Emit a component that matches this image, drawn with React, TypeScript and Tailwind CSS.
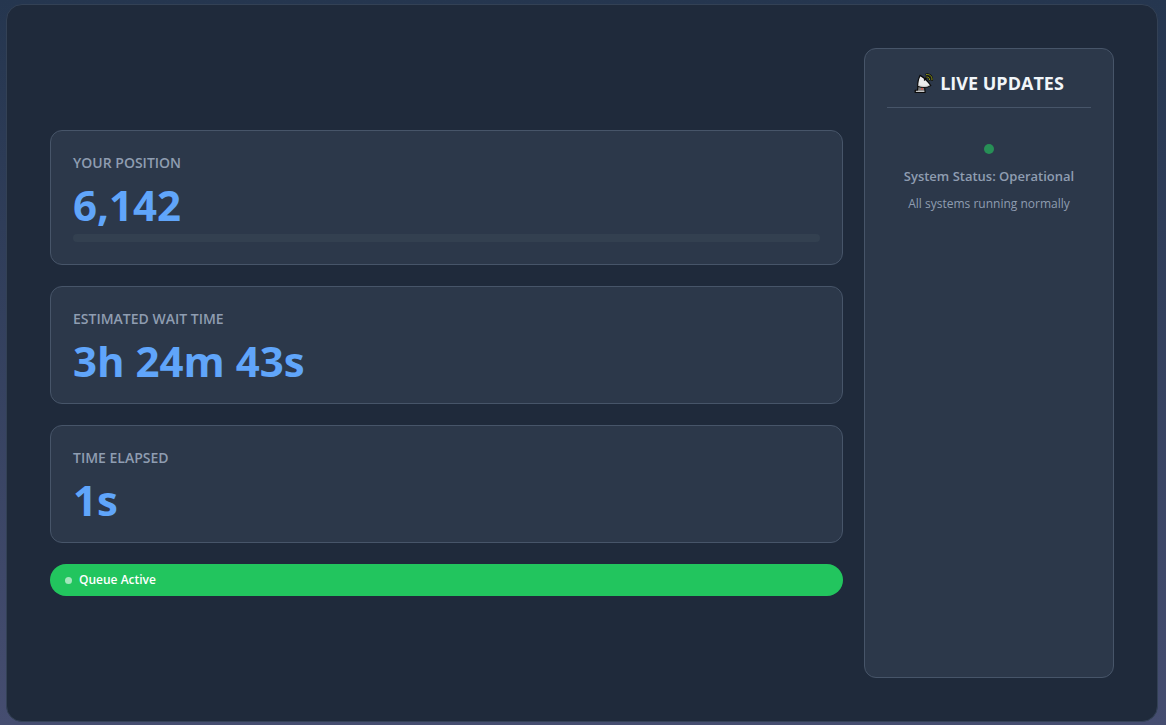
import type { ReactNode } from "react";

function SatelliteIcon() {
    return (
        <svg className="h-5 w-5 shrink-0" viewBox="0 0 20 20" fill="none" aria-hidden="true">
            <path d="M4 12.500h6.500l.6 7H1.200V17.300h2.300z" fill="#7b7b7b" stroke="#0b0b0b" strokeWidth="1.200" strokeLinejoin="round" />
            <path d="M2 18.300h8.300" stroke="#d2d2d2" strokeWidth="1.100" />
            <path d="M6 2.400C4.600 5.500 3.400 10 3.800 13.300c4.200 1.500 9.600 1.400 13-.8C14 8.500 10 4.500 6 2.400z" fill="#ececec" stroke="#0b0b0b" strokeWidth="1.200" strokeLinejoin="round" />
            <path d="M4.500 12.600c3.500 1.100 7.600 1.100 10.600-.1" stroke="#c4c4c4" strokeWidth="0.900" />
            <path d="M7.800 15l.6 1.700" stroke="#e0493c" strokeWidth="1.500" />
            <path d="M10.500 7l2.300-2.800" stroke="#0b0b0b" strokeWidth="1.500" strokeLinecap="round" />
            <path d="M12.500 1.500c3.400-.4 5.800 1.900 5.500 5.300M12.700 4c2-.2 3 .8 2.800 2.800" stroke="#0b0b0b" strokeWidth="2.200" strokeLinecap="round" />
            <path d="M12.500 1.500c3.400-.4 5.800 1.900 5.500 5.300M12.700 4c2-.2 3 .8 2.800 2.800" stroke="#919c1a" strokeWidth="1" strokeLinecap="round" />
        </svg>
    );
}

function StatCard({ label, value, children }: { label: string; value: string; children?: ReactNode }) {
    return (
        <div className="rounded-xl border border-[#475569] bg-[#2c384a] px-[22px] pt-[22px] pb-[18px]">
            <div className="text-[14px] leading-5 font-semibold text-[#8f9db1] uppercase">{label}</div>
            <div className="mt-2 text-[42px] leading-[48px] font-bold text-[#60a5fa]">{value}</div>
            {children}
        </div>
    );
}

function LiveUpdates() {
    return (
        <aside className="w-[250px] shrink-0 rounded-xl border border-[#475569] bg-[#2c384a] p-[22px] text-center">
            <h2 className="flex items-center justify-center gap-[6px] border-b border-[#475569] pb-3 text-[18px] leading-6 font-bold text-[#f1f5f9]">
                <SatelliteIcon />
                LIVE UPDATES
            </h2>
            <div className="mt-9 flex flex-col items-center">
                <span className="h-[10px] w-[10px] rounded-full bg-[#278f56]" />
                <p className="mt-3 text-[13px] leading-5 font-semibold text-[#8f9db1]">System Status: Operational</p>
                <p className="mt-2 text-[12px] leading-5 text-[#8f9db1]">All systems running normally</p>
            </div>
        </aside>
    );
}

function App() {
    return (
        <div className="flex min-h-screen bg-linear-to-b from-[#25364f] to-[#454d70] pt-1 pr-2 pb-[3px] pl-[6px] font-['Open_Sans','Noto_Sans',sans-serif]">
            <main className="flex flex-auto gap-[21px] rounded-2xl border border-[#334155] bg-[#1f2a3b] p-[43px]">
                <div className="flex flex-auto flex-col justify-center gap-[21px]">
                    <StatCard label="Your Position" value="6,142">
                        <div className="mt-[5px] mb-1 h-2 rounded-full bg-[#334050]" />
                    </StatCard>
                    <StatCard label="Estimated Wait Time" value="3h 24m 43s" />
                    <StatCard label="Time Elapsed" value="1s" />
                    <div className="flex items-center gap-[7px] rounded-full bg-[#22c55e] px-[15px] py-[6px] text-[12px] leading-5 font-semibold text-white">
                        <span className="h-[7px] w-[7px] rounded-full bg-[#a3e6bc]" />
                        Queue Active
                    </div>
                </div>
                <LiveUpdates />
            </main>
        </div>
    );
}

export default App;
